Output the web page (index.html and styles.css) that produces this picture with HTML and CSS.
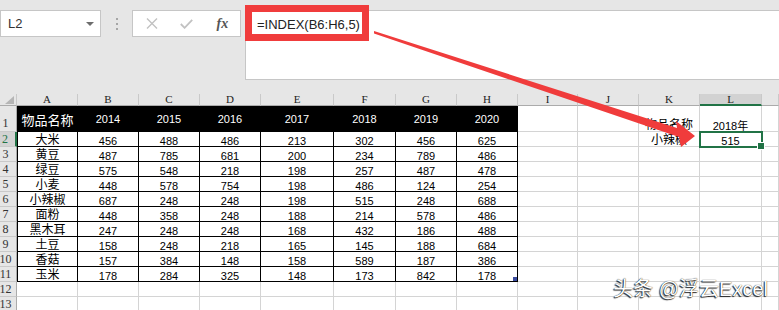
FILE: index.html
```html
<!DOCTYPE html>
<html lang="zh-CN">
<head>
    <meta charset="UTF-8">
    <title>INDEX</title>
    <link rel="stylesheet" href="styles.css">
</head>
<body>
    <div class="formula-bar">
        <div class="name-box">
            <span>L2</span>
            <span class="dropdown"></span>
        </div>
        <div class="grip"><span></span><span></span><span></span></div>
        <div class="fx-buttons">
            <span>
                <svg width="12" height="11" viewBox="0 0 12 11"><path d="M1 0.5 L11 10.5 M11 0.5 L1 10.5" stroke="#c2c2c2" stroke-width="1.4" fill="none"/></svg>
            </span>
            <span>
                <svg width="13" height="10" viewBox="0 0 13 10"><path d="M0.8 5 L4.6 8.8 L12.2 0.8" stroke="#c2c2c2" stroke-width="1.8" fill="none"/></svg>
            </span>
            <span class="fx-label">fx</span>
        </div>
        <div class="formula-input">=INDEX(B6:H6,5)</div>
    </div>

    <div class="sheet" id="sheet"></div>

    <!-- annotation overlays -->
    <div class="red-box"></div>
    <svg class="arrow" width="779" height="310" viewBox="0 0 779 310">
        <polygon points="374,31 677,128 676,121 695,136 681,147 679,137 374,33.5" fill="#f03c3c"/>
    </svg>
    <div class="watermark">头条 @浮云Excel</div>

    <script>
        const cols = ['A','B','C','D','E','F','G','H','I','J','K','L',''];
        const years = [2014, 2015, 2016, 2017, 2018, 2019, 2020];
        const items = [
            ['大米', 456, 488, 486, 213, 302, 456, 625],
            ['黄豆', 487, 785, 681, 200, 234, 789, 486],
            ['绿豆', 575, 548, 218, 198, 257, 487, 478],
            ['小麦', 448, 578, 754, 198, 486, 124, 254],
            ['小辣椒', 687, 248, 248, 198, 515, 248, 688],
            ['面粉', 448, 358, 248, 188, 214, 578, 486],
            ['黑木耳', 247, 248, 248, 168, 432, 186, 488],
            ['土豆', 158, 248, 218, 165, 145, 188, 684],
            ['香菇', 157, 384, 148, 158, 589, 187, 386],
            ['玉米', 178, 284, 325, 148, 173, 842, 178]
        ];

        const sheet = document.getElementById('sheet');

        function cell(cls, text) {
            const div = document.createElement('div');
            div.className = cls;
            if (text !== undefined) div.textContent = text;
            sheet.appendChild(div);
            return div;
        }

        // column headers
        cell('corner').innerHTML = '<span class="corner-mark"></span>';
        cols.forEach(c => cell(c === 'L' ? 'ch active' : 'ch', c));

        // row 1: table header
        cell('rh tall', '1');
        cell('c t th first cjk', '物品名称');
        years.forEach(y => cell('c t th', y));
        cell('c'); cell('c');
        cell('c cjk', '物品名称');
        cell('c', '2018年');
        cell('c');

        // rows 2 - 11: data
        items.forEach((row, i) => {
            const r = i + 2;
            cell(r === 2 ? 'rh active' : 'rh', r);
            cell('c t first cjk', row[0]);
            row.slice(1).forEach((v, j) => cell(j === 6 && r === 11 ? 'c t mark' : 'c t', v));
            cell('c'); cell('c');
            if (r === 2) {
                cell('c cjk', '小辣椒');
                cell('c sel', 515);
            } else {
                cell('c'); cell('c');
            }
            cell('c');
        });

        // empty rows
        [12, 13].forEach(r => {
            cell('rh', r);
            cols.forEach(() => cell('c'));
        });
    </script>
</body>
</html>
```

FILE: styles.css
```css
* {
    margin: 0;
    padding: 0;
    box-sizing: border-box;
}

body {
    width: 779px;
    height: 310px;
    overflow: hidden;
    position: relative;
    background: #e6e6e6;
    font-family: 'Liberation Sans', 'Noto Sans CJK SC', sans-serif;
    color: #000;
}

/* formula bar */
.formula-bar {
    height: 94px;
    display: flex;
    align-items: flex-start;
    padding-top: 10px;
}

.name-box {
    width: 101px;
    height: 27px;
    background: #fff;
    border: 1px solid #c6c6c6;
    display: flex;
    align-items: center;
    justify-content: space-between;
    padding: 0 6px 0 7px;
    font-size: 13px;
    color: #333;
}

.dropdown {
    width: 0;
    height: 0;
    border-left: 4px solid transparent;
    border-right: 4px solid transparent;
    border-top: 4px solid #6d6d6d;
}

.grip {
    width: 31px;
    height: 27px;
    display: flex;
    flex-direction: column;
    align-items: center;
    justify-content: center;
    gap: 3px;
}

.grip span {
    width: 2px;
    height: 2px;
    background: #a6a6a6;
}

.fx-buttons {
    width: 109px;
    height: 27px;
    background: #fff;
    border: 1px solid #c6c6c6;
    display: flex;
    align-items: center;
    padding-left: 1px;
}

.fx-buttons span {
    width: 36px;
    display: flex;
    justify-content: center;
    align-items: center;
}

.fx-label {
    font-family: 'Liberation Serif', serif;
    font-style: italic;
    font-weight: 700;
    font-size: 14px;
    color: #555;
}

.formula-input {
    flex: 1;
    height: 70px;
    margin-left: 4px;
    background: #fff;
    border: 1px solid #c6c6c6;
    border-right: none;
    padding: 6px 11px;
    font-size: 13px;
    line-height: 16px;
    color: #222;
}

/* worksheet grid */
.sheet {
    display: grid;
    grid-template-columns: 17px 61px 61px 61px 61px 73px 62px 61px 61px 60px 61px 61px 62px 1fr;
    grid-template-rows: 12px 26px repeat(12, 15px);
}

.corner {
    background: #e6e6e6;
    border-right: 1px solid #c9c9c9;
    border-bottom: 1px solid #ababab;
    display: flex;
    justify-content: flex-end;
    align-items: flex-end;
    padding: 0 2px 1px 0;
}

.corner-mark {
    width: 0;
    height: 0;
    border-style: solid;
    border-width: 0 0 8px 9px;
    border-color: transparent transparent #b5b5b5 transparent;
}

.ch {
    background: #e6e6e6;
    border-right: 1px solid #c9c9c9;
    border-bottom: 1px solid #ababab;
    font-family: 'Liberation Serif', serif;
    font-size: 11px;
    line-height: 11px;
    color: #222;
    text-align: center;
}

.ch.active {
    background: #d2d2d2;
    border-bottom: 2px solid #217346;
}

.rh {
    background: #e6e6e6;
    border-right: 1px solid #ababab;
    border-bottom: 1px solid #c9c9c9;
    font-family: 'Liberation Serif', serif;
    font-size: 12px;
    line-height: 12px;
    color: #333;
    display: flex;
    align-items: flex-end;
    justify-content: center;
    padding: 0 5px 1px 0;
}

.rh.tall {
    padding-bottom: 2px;
}

.rh.active {
    background: #d2d2d2;
    color: #217346;
    border-right: 2px solid #217346;
}

.c {
    position: relative;
    background: #fff;
    border-right: 1px solid #d4d4d4;
    border-bottom: 1px solid #d4d4d4;
    display: flex;
    align-items: flex-end;
    justify-content: center;
    font-size: 11px;
    line-height: 10px;
    white-space: nowrap;
}

.cjk {
    font-family: 'Noto Sans CJK SC', sans-serif;
    font-size: 12px;
    line-height: 14px;
}

.t {
    border-right-color: #000;
    border-bottom-color: #000;
}

.t.first {
    border-left: 1px solid #000;
}

.th {
    background: #000;
    color: #fff;
    align-items: center;
}

.th.cjk {
    font-size: 13px;
    padding-top: 3px;
}

.sel {
    outline: 2px solid #217346;
    outline-offset: -1px;
    z-index: 1;
}

.sel::after {
    content: '';
    position: absolute;
    right: -4px;
    bottom: -4px;
    width: 6px;
    height: 6px;
    background: #217346;
    border: 1px solid #fff;
}

.mark::after {
    content: '';
    position: absolute;
    right: 0;
    bottom: 0;
    width: 4px;
    height: 4px;
    background: #3b4c9e;
}

/* annotations */
.red-box {
    position: absolute;
    left: 245px;
    top: 5px;
    width: 124px;
    height: 36px;
    border: 7px solid #f03c3c;
}

.arrow {
    position: absolute;
    left: 0;
    top: 0;
    pointer-events: none;
    z-index: 2;
}

.watermark {
    position: absolute;
    right: 11px;
    bottom: 11px;
    font-family: 'Liberation Sans', 'Noto Sans CJK SC', sans-serif;
    font-size: 20px;
    line-height: 1;
    color: #fff;
    text-shadow: -1px 1px 1px rgba(0, 0, 0, 0.85), 0 0 1px #000;
    z-index: 3;
}
```
